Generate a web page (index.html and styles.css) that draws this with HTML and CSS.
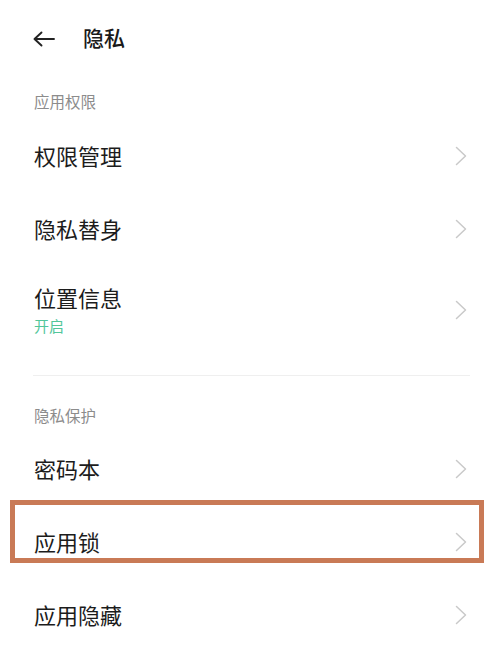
FILE: index.html
```html
<!DOCTYPE html>
<html lang="zh-CN">
<head>
<meta charset="utf-8">
<title>隐私</title>
<link rel="stylesheet" href="styles.css">
</head>
<body>
<div class="page">
  <header class="header">
    <svg class="back" width="22" height="16" viewBox="0 0 22 16" aria-hidden="true">
      <path d="M1.5 8 H21 M8.5 1.5 L1.5 8 L8.5 14.5" fill="none" stroke="#222" stroke-width="1.9" stroke-linecap="round" stroke-linejoin="round"/>
    </svg>
    <h1 class="title">隐私</h1>
  </header>

  <div class="label">应用权限</div>
  <div class="row">
    <div class="row-text"><div class="row-title">权限管理</div></div>
    <svg class="chev" width="12" height="20" viewBox="0 0 12 20"><path d="M1.5 1.5 L10.5 10 L1.5 18.5" fill="none" stroke="#c9c9c9" stroke-width="1.5" stroke-linecap="round" stroke-linejoin="round"/></svg>
  </div>
  <div class="row">
    <div class="row-text"><div class="row-title">隐私替身</div></div>
    <svg class="chev" width="12" height="20" viewBox="0 0 12 20"><path d="M1.5 1.5 L10.5 10 L1.5 18.5" fill="none" stroke="#c9c9c9" stroke-width="1.5" stroke-linecap="round" stroke-linejoin="round"/></svg>
  </div>
  <div class="row row-tall">
    <div class="row-text">
      <div class="row-title">位置信息</div>
      <div class="row-sub">开启</div>
    </div>
    <svg class="chev" width="12" height="20" viewBox="0 0 12 20"><path d="M1.5 1.5 L10.5 10 L1.5 18.5" fill="none" stroke="#c9c9c9" stroke-width="1.5" stroke-linecap="round" stroke-linejoin="round"/></svg>
  </div>

  <div class="divider"></div>

  <div class="label label-second">隐私保护</div>
  <div class="row">
    <div class="row-text"><div class="row-title">密码本</div></div>
    <svg class="chev" width="12" height="20" viewBox="0 0 12 20"><path d="M1.5 1.5 L10.5 10 L1.5 18.5" fill="none" stroke="#c9c9c9" stroke-width="1.5" stroke-linecap="round" stroke-linejoin="round"/></svg>
  </div>
  <div class="row row-marked">
    <div class="row-text"><div class="row-title">应用锁</div></div>
    <svg class="chev" width="12" height="20" viewBox="0 0 12 20"><path d="M1.5 1.5 L10.5 10 L1.5 18.5" fill="none" stroke="#c9c9c9" stroke-width="1.5" stroke-linecap="round" stroke-linejoin="round"/></svg>
    <div class="highlight"></div>
  </div>
  <div class="row">
    <div class="row-text"><div class="row-title">应用隐藏</div></div>
    <svg class="chev" width="12" height="20" viewBox="0 0 12 20"><path d="M1.5 1.5 L10.5 10 L1.5 18.5" fill="none" stroke="#c9c9c9" stroke-width="1.5" stroke-linecap="round" stroke-linejoin="round"/></svg>
  </div>
</div>
</body>
</html>
```

FILE: styles.css
```css
* { box-sizing: border-box; }

html, body {
  margin: 0;
  padding: 0;
  background: #ffffff;
}

body {
  font-family: "Noto Sans CJK SC", "Noto Sans", sans-serif;
  color: #1c1c1c;
}

.page {
  width: 500px;
  height: 661px;
  overflow: hidden;
}

.header {
  display: flex;
  align-items: center;
  padding: 21.5px 0 0 33px;
  height: 51.5px;
}

.back {
  display: block;
  flex: none;
  margin-top: 4px;
}

.title {
  margin: 0 0 0 28px;
  font-size: 21px;
  line-height: 30px;
  font-weight: 500;
  color: #1a1a1a;
}

.label {
  padding: 38px 0 7.5px 34px;
  font-size: 15.5px;
  line-height: 22px;
  color: #8c8c8c;
}

.label-second {
  padding-top: 28px;
  padding-bottom: 6.5px;
}

.row {
  display: flex;
  align-items: center;
  justify-content: space-between;
  height: 73px;
  padding: 0 33px 0 34px;
}

.row-text {
  margin-top: -2px;
}

.row-tall {
  height: 89.5px;
}

.row-title {
  font-size: 22px;
  line-height: 30px;
  color: #1c1c1c;
}

.row-sub {
  margin-top: 4px;
  font-size: 15px;
  line-height: 20px;
  color: #52c69a;
}

.chev {
  display: block;
  flex: none;
  margin-top: 0;
}

.divider {
  height: 1px;
  margin: 20.5px 30px 0 33px;
  background: #efefef;
}

.row-marked {
  position: relative;
}

.highlight {
  position: absolute;
  left: 10px;
  top: -5.5px;
  width: 474px;
  height: 63px;
  border: 5px solid #c97a56;
  pointer-events: none;
}
```
